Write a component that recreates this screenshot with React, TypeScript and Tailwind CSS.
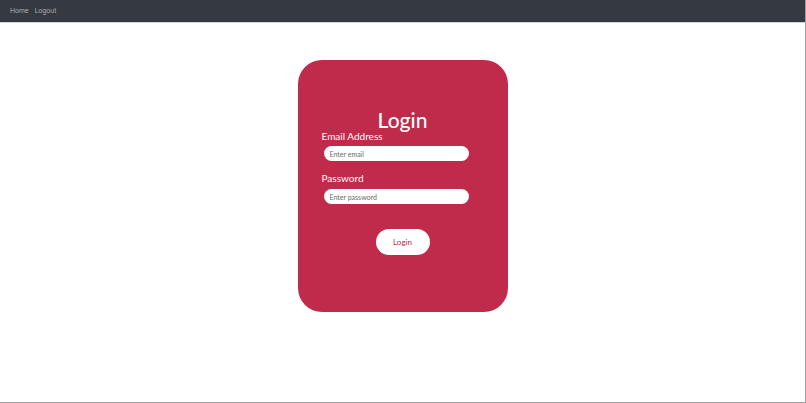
const App = () => {
  return (
    <div
      className="min-h-screen h-[403px] bg-white border-r border-b border-[#a0a0a0] flex flex-col"
      style={{ fontFamily: "Lato, 'Noto Sans', sans-serif" }}
    >
      <nav
        className="h-[23px] shrink-0 bg-[#343a40] flex items-center gap-[6px] px-[10px] pt-[1px] border-b border-[#cfd4d8]"
        style={{ fontFamily: "'Liberation Sans', Arial, sans-serif" }}
      >
        <a className="text-[7px] text-[#a9adb2]">Home</a>
        <a className="text-[7px] text-[#a9adb2]">Logout</a>
      </nav>

      <div className="flex justify-center pt-[37px]">
        <div className="w-[210px] h-[252px] rounded-[24px] bg-[#c02a4b] flex flex-col pt-[46px] px-[24px]">
          <h1 className="text-center text-[21px] leading-[28px] font-medium text-white">Login</h1>

          <label className="mt-[-4px] text-[10px] leading-[13px] text-white">Email Address</label>
          <input
            type="email"
            placeholder="Enter email"
            className="mt-[3px] ml-[2px] w-[145px] h-[15px] rounded-full bg-white px-[6px] text-[7px] text-gray-700 placeholder:text-[#6b6b6b] outline-none"
          />

          <label className="mt-[11px] text-[10px] leading-[13px] text-white">Password</label>
          <input
            type="password"
            placeholder="Enter password"
            className="mt-[4px] ml-[2px] w-[145px] h-[15px] rounded-full bg-white px-[6px] text-[7px] text-gray-700 placeholder:text-[#6b6b6b] outline-none"
          />

          <div className="flex justify-center mt-[25px]">
            <button className="w-[54px] h-[26px] rounded-full bg-white text-[8px] text-[#c02a4b]">
              Login
            </button>
          </div>
        </div>
      </div>
    </div>
  );
};

export default App;
